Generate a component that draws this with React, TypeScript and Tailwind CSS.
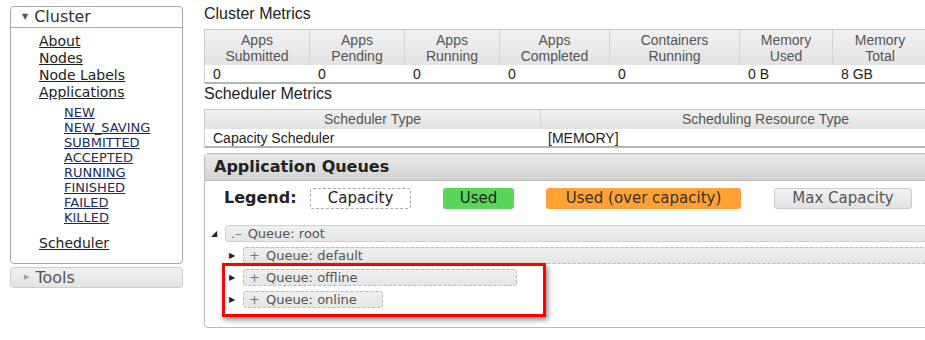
import React from "react";

const verdana = { fontFamily: '"DejaVu Sans", Verdana, sans-serif' };
const arial = { fontFamily: '"Liberation Sans", Arial, sans-serif' };

const appStates = ["NEW", "NEW_SAVING", "SUBMITTED", "ACCEPTED", "RUNNING", "FINISHED", "FAILED", "KILLED"];

const clusterCols = [
  { top: "Apps", bottom: "Submitted", w: 105, v: "0" },
  { top: "Apps", bottom: "Pending", w: 95, v: "0" },
  { top: "Apps", bottom: "Running", w: 95, v: "0" },
  { top: "Apps", bottom: "Completed", w: 110, v: "0" },
  { top: "Containers", bottom: "Running", w: 130, v: "0" },
  { top: "Memory", bottom: "Used", w: 93, v: "0 B" },
  { top: "Memory", bottom: "Total", w: 95, v: "8 GB" },
];

function Sidebar() {
  return (
    <div className="w-[173px] shrink-0 ml-[10px] mt-[6px]" style={verdana}>
      <div className="border border-[#aaa] rounded-[4px] h-[258px] bg-white">
        <div className="h-[21px] border-b border-[#aaa] flex items-center pl-[11px] text-[16px] text-[#333]">
          <span className="text-[8px] mr-[6px] text-[#555]">▼</span>
          Cluster
        </div>
        <div className="pl-[28px] pt-[5px] text-[14px] leading-[17px] text-[#222]">
          <div className="underline">About</div>
          <div className="underline">Nodes</div>
          <div className="underline">Node Labels</div>
          <div className="underline">Applications</div>
          <div className="pl-[25px] pt-[4px] text-[13px] leading-[15px] text-[#1c2b60]">
            {appStates.map((s) => (
              <div key={s} className="underline">{s}</div>
            ))}
          </div>
          <div className="underline mt-[10px]">Scheduler</div>
        </div>
      </div>
      <div className="mt-[3px] h-[21px] border border-[#ccc] rounded-[4px] bg-gradient-to-b from-[#f0f0f0] to-[#e3e3e3] flex items-center pl-[13px] text-[16px] text-[#555]">
        <span className="text-[7px] mr-[6px] text-[#999]">▶</span>
        Tools
      </div>
    </div>
  );
}

function ClusterMetrics() {
  return (
    <div style={arial}>
      <div className="text-[16px] text-[#222] h-[23px] leading-[23px] mt-[2px]">Cluster Metrics</div>
      <div className="border-l border-t border-[#ccc] w-[740px] mt-[4px]">
        <div className="flex h-[35px] bg-gradient-to-b from-[#f1f1f1] to-[#e2e2e2]">
          {clusterCols.map((c, i) => (
            <div
              key={i}
              style={{ width: c.w }}
              className="shrink-0 border-r border-[#d4d4d4] flex flex-col items-center justify-center text-[14px] leading-[16px] text-[#555]"
            >
              <div>{c.top}</div>
              <div>{c.bottom}</div>
            </div>
          ))}
        </div>
        <div className="flex h-[19px] border-b-2 border-[#b4b4b4] bg-white">
          {clusterCols.map((c, i) => (
            <div key={i} style={{ width: c.w }} className="shrink-0 pl-[8px] text-[14px] leading-[18px] text-[#222]">
              {c.v}
            </div>
          ))}
        </div>
      </div>
    </div>
  );
}

function SchedulerMetrics() {
  return (
    <div style={arial}>
      <div className="text-[16px] text-[#222] h-[20px] leading-[20px]">Scheduler Metrics</div>
      <div className="border-l border-t border-[#ccc] w-[786px] mt-[5px]">
        <div className="flex h-[19px] bg-gradient-to-b from-[#f1f1f1] to-[#e2e2e2] text-[14px] leading-[19px] text-[#555]">
          <div className="w-[336px] shrink-0 border-r border-[#d4d4d4] text-center">Scheduler Type</div>
          <div className="flex-1 text-center">Scheduling Resource Type</div>
        </div>
        <div className="flex h-[19px] border-b-2 border-[#b4b4b4] bg-white text-[14px] leading-[18px] text-[#222]">
          <div className="w-[336px] shrink-0 pl-[8px]">Capacity Scheduler</div>
          <div className="flex-1 pl-[7px]">[MEMORY]</div>
        </div>
      </div>
    </div>
  );
}

function LegendBox({ label, cls, w }: { label: string; cls: string; w: number }) {
  return (
    <div style={{ width: w }} className={`h-[21px] rounded-[3px] flex items-center justify-center text-[15px] ${cls}`}>
      {label}
    </div>
  );
}

function QueueRow({
  label,
  sign,
  w,
  dashed,
  arrow,
  indent,
}: {
  label: string;
  sign: string;
  w: number;
  dashed: boolean;
  arrow: string;
  indent: number;
}) {
  return (
    <div className="flex items-center h-[17px]" style={{ paddingLeft: indent }}>
      <span className="w-[14px] text-[8px] text-[#222] shrink-0">{arrow}</span>
      <div
        style={{ width: w }}
        className={`h-[17px] shrink-0 rounded-[3px] bg-gradient-to-b from-[#efefef] to-[#e5e5e5] flex items-center pl-[5px] text-[13px] text-[#555] ${
          dashed ? "border border-dashed border-[#bbb]" : "border border-[#d0d0d0]"
        }`}
      >
        <span className="mr-[6px] text-[#777]">{sign}</span>
        {label}
      </div>
    </div>
  );
}

function ApplicationQueues() {
  return (
    <div className="mt-[5px] w-[740px] h-[175px] border border-[#bbb] rounded-[4px] relative" style={verdana}>
      <div className="h-[27px] bg-gradient-to-b from-[#eaeaea] to-[#d2d2d2] border-b border-[#bbb] flex items-center pl-[9px] text-[16px] font-bold text-[#222]">
        Application Queues
      </div>
      <div className="flex items-center mt-[5px] pl-[19px]">
        <div className="text-[16px] font-bold text-[#222] w-[86px]">Legend:</div>
        <LegendBox label="Capacity" w={101} cls="border border-dashed border-[#aaa] bg-white text-[#222]" />
        <div className="w-[32px]" />
        <LegendBox label="Used" w={71} cls="bg-[#5ad65a] text-[#222]" />
        <div className="w-[32px]" />
        <LegendBox label="Used (over capacity)" w={195} cls="bg-[#ffa133] text-[#333]" />
        <div className="w-[33px]" />
        <LegendBox label="Max Capacity" w={138} cls="border border-[#ccc] bg-gradient-to-b from-[#f2f2f2] to-[#e2e2e2] text-[#555]" />
      </div>
      <div className="mt-[15px] flex flex-col gap-[5px]">
        <QueueRow label="Queue: root" sign=".–" w={720} dashed={false} arrow="◢" indent={6} />
        <QueueRow label="Queue: default" sign="+" w={700} dashed arrow="▶" indent={24} />
        <QueueRow label="Queue: offline" sign="+" w={274} dashed arrow="▶" indent={24} />
        <QueueRow label="Queue: online" sign="+" w={140} dashed arrow="▶" indent={24} />
      </div>
      <div className="absolute left-[17px] top-[109px] w-[324px] h-[54px] border-[3px] border-[#f00] shadow-[2px_3px_5px_rgba(0,0,0,0.45)]" />
    </div>
  );
}

export default function App() {
  return (
    <div className="w-[925px] h-[340px] overflow-hidden bg-white flex">
      <Sidebar />
      <div className="ml-[21px] w-[740px] shrink-0">
        <ClusterMetrics />
        <SchedulerMetrics />
        <ApplicationQueues />
      </div>
    </div>
  );
}
